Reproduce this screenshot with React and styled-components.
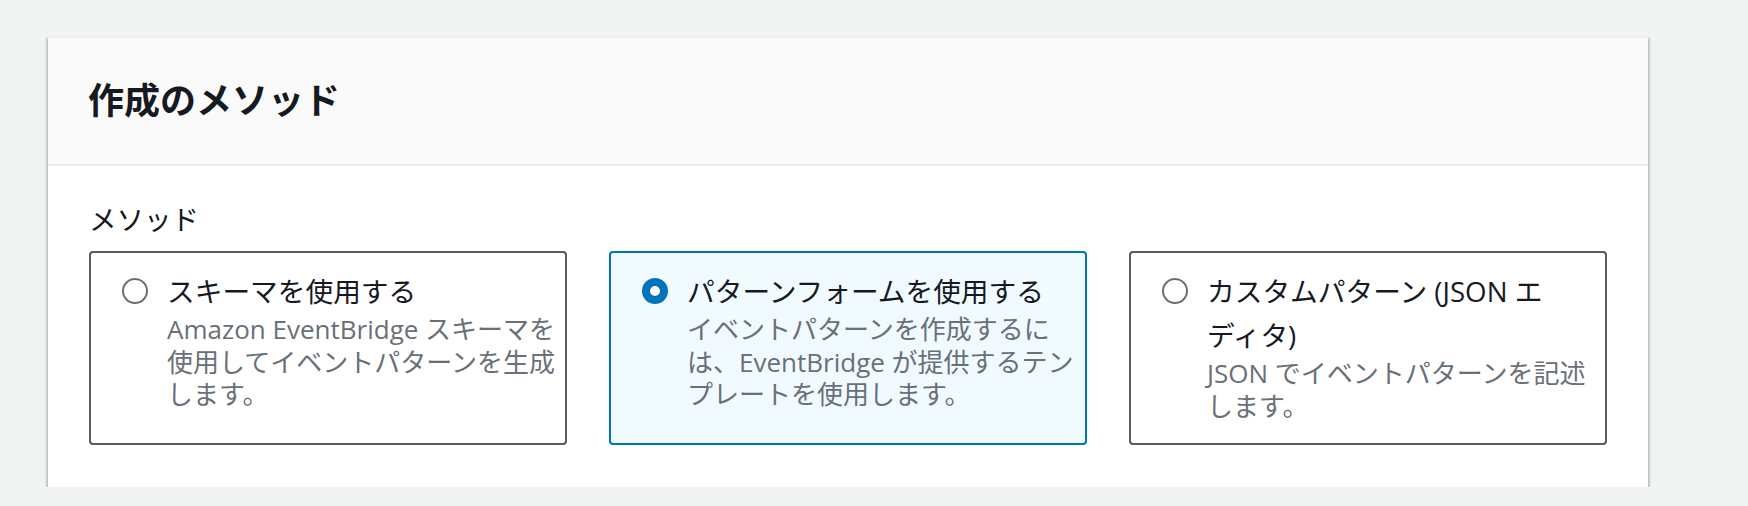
import styled, { createGlobalStyle } from 'styled-components';

const GlobalStyle = createGlobalStyle`
    body {
        margin: 0;
        background-color: #f2f3f3;
        font-family: "Open Sans", "Noto Sans CJK JP", sans-serif;
        color: #16191f;
    }
`;

const methods = [
    {
        id: 'schema',
        title: 'スキーマを使用する',
        description: 'Amazon EventBridge スキーマを使用してイベントパターンを生成します。',
    },
    {
        id: 'form',
        title: 'パターンフォームを使用する',
        description: 'イベントパターンを作成するには、EventBridge が提供するテンプレートを使用します。',
    },
    {
        id: 'custom',
        title: 'カスタムパターン (JSON エディタ)',
        description: 'JSON でイベントパターンを記述します。',
    },
];

export default function App() {
    const selected = 'form';

    return (
        <Page lang="ja">
            <GlobalStyle />
            <Panel>
                <PanelHeader>
                    <PanelTitle>作成のメソッド</PanelTitle>
                </PanelHeader>

                <PanelBody>
                    <FieldLabel>メソッド</FieldLabel>

                    <TileGrid>
                        {methods.map(({ id, title, description }) => (
                            <Tile key={id} $checked={id === selected}>
                                <Radio $checked={id === selected} />
                                <TileText>
                                    <TileTitle>{title}</TileTitle>
                                    <TileDescription>{description}</TileDescription>
                                </TileText>
                            </Tile>
                        ))}
                    </TileGrid>
                </PanelBody>
            </Panel>
        </Page>
    );
}

const Page = styled.main`
    padding: 37px 0 0 48px;
`;

const Panel = styled.section`
    width: 1600px;
    background-color: white;
    border-top: 1px solid #eaeded;
    box-shadow: 0 2px 2px 0 rgba(0, 28, 36, 0.3),
        2px 1px 2px 0 rgba(0, 28, 36, 0.15),
        -2px 1px 2px 0 rgba(0, 28, 36, 0.15);
`;

const PanelHeader = styled.header`
    height: 126px;
    padding: 0 40px;

    display: flex;
    align-items: center;

    background-color: #fafafa;
    border-bottom: 2px solid #eaeded;
`;

const PanelTitle = styled.h2`
    margin: 0;
    font-size: 36px;
    font-weight: 700;
    line-height: 44px;
    color: #16191f;
`;

const PanelBody = styled.div`
    padding: 32px 41px 42px;
`;

const FieldLabel = styled.div`
    font-size: 27.5px;
    line-height: 44px;
    margin-bottom: 9px;
`;

const TileGrid = styled.div`
    display: grid;
    grid-template-columns: repeat(3, 1fr);
    gap: 42px;
`;

const Tile = styled.label`
    height: 194px;
    box-sizing: border-box;
    padding: 16px 4px 0 31px;

    display: flex;
    align-items: flex-start;
    gap: 19px;

    border: 2px solid ${({ $checked }) => ($checked ? '#0073bb' : '#545b64')};
    border-radius: 4px;
    background-color: ${({ $checked }) => ($checked ? '#f1faff' : 'white')};
`;

const Radio = styled.span`
    flex: none;
    width: 26px;
    height: 26px;
    margin-top: 9px;
    box-sizing: border-box;
    border-radius: 50%;

    border: ${({ $checked }) => ($checked ? '8px solid #0073bb' : '2px solid #687078')};
    background-color: white;
`;

const TileText = styled.div`
    flex: 1;
    line-break: strict;
`;

const TileTitle = styled.div`
    max-width: 372px;
    font-size: 27.7px;
    line-height: 44px;
    color: #16191f;
`;

const TileDescription = styled.div`
    font-size: 26px;
    line-height: 32.5px;
    color: #687078;
`;
